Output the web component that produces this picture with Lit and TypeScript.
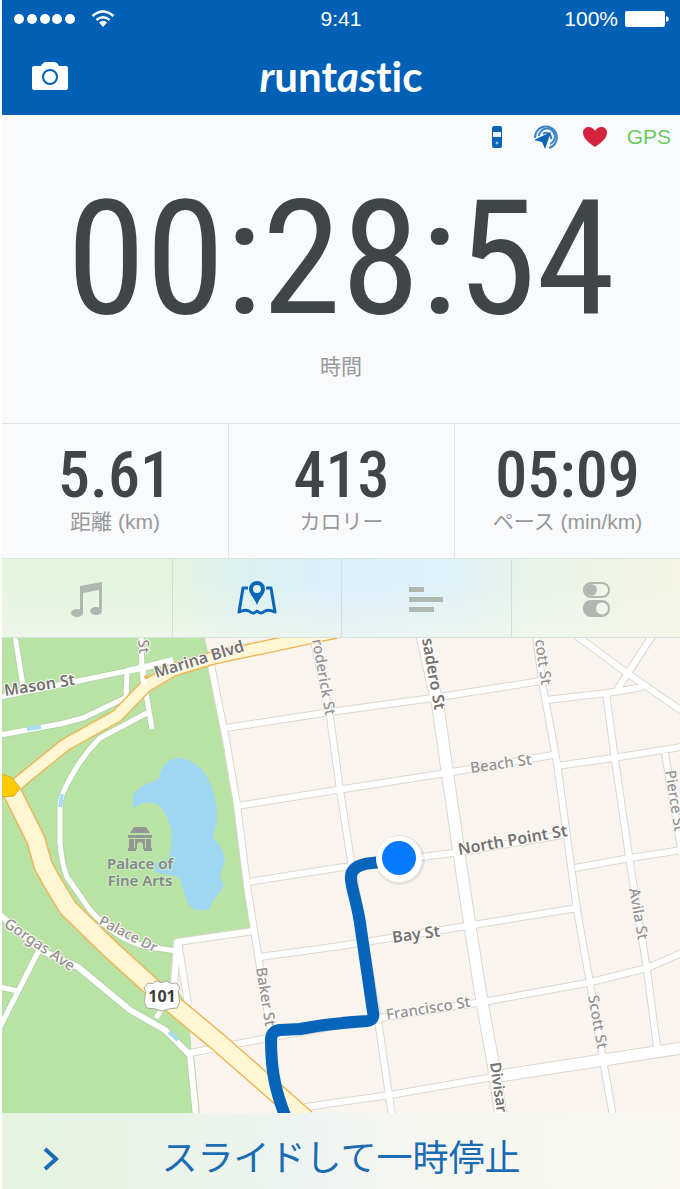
import { LitElement, html, css, svg } from "lit";
import { customElement, state } from "lit/decorators.js";

interface Label {
  text: string;
  x: number;
  y: number;
  angle: number;
  size: number;
  tone: "strong" | "soft" | "park";
}

const GREEN_ROADS = [
  "M0 697 L127 671 L173 660",
  "M15 636 L23 686",
  "M127 672 L126 697",
  "M0 735 L60 724 L83 718 L127 697",
  "M147 713 L100 738 Q85 753 75 770 Q60 795 60 805 L60 843 Q62 865 67 877 L90 910 Q115 938 143 946 L177 951",
  "M38 952 L0 1027",
  "M0 987 L18 991",
  "M156 1018 L164 1006",
];

const GORGAS = ["M0 915 L40 950 L78 967 L130 1010 L165 1030 L190 1055 L196 1116"];

const CITY_ROADS = [
  "M209 655 L226 740 L237 805 L247 885 L254 930 L262 980 L272 1037",
  "M177 951 L177 942 L254 931",
  "M177 942 L174 985 M178 942 L188 1004",
  "M313 636 L330 717 L340 790 L352 868 L378 1020 L392 1116",
  "M536 636 L543 687 L557 763 L577 910 L590 983 L603 1060 L613 1116",
  "M606 693 L615 760 L630 863 L647 970 L657 1047",
  "M665 753 L682 855",
  "M226 728 L337 711 L433 698 L541 681",
  "M546 700 L607 693 L643 687",
  "M237 806 L337 790 L440 774 L553 755",
  "M557 766 L613 758 L682 747",
  "M248 882 L337 868 L453 853 L568 834",
  "M575 868 L630 858 L682 850",
  "M260 957 L340 946 L473 925 L577 908",
  "M190 1053 L273 1037 L380 1018 L483 1002 L587 983 L647 968 L682 953",
  "M300 1108 L340 1102 L390 1095 L493 1077",
];

const WIDE_ROADS = [
  "M422 636 L438 707 L448 777 L463 880 L480 990 L493 1063 L501 1116",
  "M493 1077 L603 1060 L682 1048",
];

const DIAGONALS = ["M577 636 L627 673 L682 711", "M652 636 L617 690"];

const HIGHWAY = ["M8 784 L24 816 L36 840 L43 865 L51 880 L68 908 L108 947 L152 987 L218 1042 L306 1119"];
const MARINA = ["M10 790 L28 775 L65 745 L90 731 L117 716 L146 686 L173 670 L213 658 L270 646 L336 632"];

const LABELS: Label[] = [
  { text: "Mason St", x: 5, y: 696, angle: -9, size: 16, tone: "strong" },
  { text: "St", x: 138, y: 640, angle: 85, size: 15, tone: "soft" },
  { text: "Marina Blvd", x: 156, y: 678, angle: -17, size: 16, tone: "strong" },
  { text: "roderick St", x: 312, y: 640, angle: 80, size: 15, tone: "soft" },
  { text: "sadero St", x: 422, y: 639, angle: 80, size: 16, tone: "strong" },
  { text: "cott St", x: 535, y: 640, angle: 82, size: 15, tone: "soft" },
  { text: "Beach St", x: 471, y: 773, angle: -8, size: 15, tone: "soft" },
  { text: "North Point St", x: 459, y: 855, angle: -10, size: 16, tone: "strong" },
  { text: "Pierce St", x: 665, y: 771, angle: 81, size: 15, tone: "soft" },
  { text: "Bay St", x: 393, y: 943, angle: -8, size: 16, tone: "strong" },
  { text: "Avila St", x: 629, y: 889, angle: 80, size: 15, tone: "soft" },
  { text: "Francisco St", x: 387, y: 1020, angle: -9, size: 15, tone: "soft" },
  { text: "Scott St", x: 588, y: 996, angle: 80, size: 15, tone: "soft" },
  { text: "Divisar", x: 490, y: 1063, angle: 82, size: 15, tone: "strong" },
  { text: "Baker St", x: 256, y: 968, angle: 81, size: 15, tone: "soft" },
  { text: "Gorgas Ave", x: 3, y: 926, angle: 34, size: 15, tone: "soft" },
  { text: "Palace Dr", x: 98, y: 924, angle: 27, size: 14, tone: "soft" },
];

@customElement("run-map")
export class RunMap extends LitElement {
  static styles = css`
    :host {
      display: block;
      background: #f9f4ed;
      overflow: hidden;
    }
    svg {
      display: block;
      width: 100%;
      height: 100%;
    }
    text {
      font-family: "Noto Sans", "Open Sans", sans-serif;
      stroke-width: 2px;
      paint-order: stroke;
      stroke-linejoin: round;
    }
    .strong { fill: #737171; stroke: #fffdf9; font-weight: 600; }
    .soft { fill: #949191; stroke: #fdfaf6; font-weight: 500; }
    .park { fill: #85858c; stroke: #c9ebbd; font-weight: 600; text-anchor: middle; }
    .shield { fill: #3d3d3d; font-weight: 700; text-anchor: middle; stroke: none; }
    .line { fill: none; stroke-linejoin: round; }
    .edge { stroke: #dcd6cf; }
    .edge-park { stroke: #b5d3a8; }
    .road { stroke: #ffffff; }
    .amber { stroke: #edb75b; }
    .cream { stroke: #fff6d3; }
    .route { stroke: #0764bb; stroke-width: 12px; stroke-linecap: butt; }
  `;

  private lines(paths: string[], cls: string, width: number) {
    return paths.map((d) => svg`<path class="line ${cls}" d=${d} stroke-width=${width}></path>`);
  }

  render() {
    return html`
      <svg viewBox="2 638 678 475" preserveAspectRatio="xMidYMid slice" role="img" aria-label="Map">
        <path fill="#b9e3a5" d="M2 638 H205 L226 740 L254 931 L177 942 L174 985 L188 1005 L192 1055 L196 1113 H2 Z"></path>
        <path
          fill="#9fd7f3"
          d="M133 796 Q138 785 158 780 Q163 758 178 758 Q195 759 206 775 Q218 795 217 822 L213 837 Q225 850 225 861 L220 875 L224 886 L213 901 L209 910 L197 910 Q187 909 183 888 L179 877 L155 872 L154 863 L168 859 Q173 845 171 828 Q165 809 157 804 Q145 800 133 808 Z"
        ></path>

        ${this.lines(GREEN_ROADS, "edge-park", 7)}
        ${this.lines(["M141 636 L142 668 L152 729"], "edge-park", 7)}
        ${this.lines(GORGAS, "edge-park", 8)}
        ${this.lines(CITY_ROADS, "edge", 8)}
        ${this.lines(DIAGONALS, "edge", 8)}
        ${this.lines(WIDE_ROADS, "edge", 13)}
        ${this.lines(GREEN_ROADS, "road", 5)}
        ${this.lines(["M141 636 L142 668 L152 729"], "road", 5)}
        ${this.lines(GORGAS, "road", 6)}
        ${this.lines(CITY_ROADS, "road", 6)}
        ${this.lines(DIAGONALS, "road", 6)}
        ${this.lines(WIDE_ROADS, "road", 11)}

        ${this.lines(MARINA, "amber", 14)}
        ${this.lines(HIGHWAY, "amber", 20)}
        ${this.lines(MARINA, "cream", 11)}
        ${this.lines(HIGHWAY, "cream", 17)}
        ${this.lines(["M127 671 L146 667 L173 660"], "road", 6)}
        ${this.lines(["M142 664 L144 684"], "road", 6)}
        <circle cx="146" cy="677" r="2" fill="#edb75b"></circle>
        <path d="M0 773 L12 778 L20 788 L14 796 L0 797 Z" fill="#ffcb05" stroke="#d9a520" stroke-width="1"></path>
        <path class="line" stroke="#a8dcf5" stroke-width="4" d="M27 729 L41 727 M62 794 L60 807 M169 1032 L178 1040"></path>

        ${LABELS.map(
          (l) => svg`<text class=${l.tone} font-size=${l.size}
            transform="translate(${l.x} ${l.y}) rotate(${l.angle})">${l.text}</text>`
        )}
        <text class="park" font-size="15" x="140" y="869">Palace of</text>
        <text class="park" font-size="15" x="140" y="886">Fine Arts</text>
        <g fill="#929791">
          <path d="M134 827 H146 L150 833 H130 Z M128 835 H152 V838 H128 Z"></path>
          <path d="M129 839 H134 V849 H129 Z M146 839 H151 V849 H146 Z M128 848 H136 V851 H128 Z M144 848 H152 V851 H144 Z"></path>
          <path d="M135 839 H145 V849 H143 V844 Q140 840 137 844 V849 H135 Z"></path>
        </g>

        <path
          d="M148 983 Q153 985 156 981 Q162 984 167 981 Q171 985 176 983 L180 988 Q177 991 179 996 Q181 1003 177 1008 Q170 1008 162 1011 Q154 1008 147 1008 Q143 1003 145 996 Q147 991 144 988 Z"
          fill="#fff" stroke="#aaa69c" stroke-width="1"
        ></path>
        <text class="shield" font-size="16" x="162" y="1002">101</text>

        <path class="line route" d="M392 861 L372 863 Q349 865 351 880 C353 895 358 905 361 930 L373 1012 Q375 1020 367 1021 C335 1023 315 1026 300 1029 L280 1030 Q271 1031 271 1040 C271 1075 277 1095 286 1118"></path>
        <circle cx="400" cy="860" r="25" fill="#00000012"></circle>
        <circle cx="399" cy="859" r="23" fill="#fff"></circle>
        <circle cx="399" cy="858" r="17" fill="#067aff"></circle>
      </svg>
    `;
  }
}

const TABS = [
  {
    id: "music",
    label: "Music",
    icon: svg`<g fill="currentColor"><path d="M13 6 L35 2 V29 H32 V10 L16 13 V33 H13 Z"></path>
      <ellipse cx="10" cy="33" rx="6" ry="4"></ellipse><ellipse cx="29" cy="31" rx="6" ry="4"></ellipse></g>`,
  },
  {
    id: "map",
    label: "Map",
    icon: svg`<path d="M11 8 H6 L2 32 Q8 29 12 31 Q16 35 20 31 Q24 35 28 31 Q32 29 38 32 L34 8 H29" fill="none" stroke="currentColor" stroke-width="3" stroke-linejoin="round"></path>
      <path fill="currentColor" fill-rule="evenodd" d="M20 1 A8 8 0 0 1 28 9 C28 14 23 17 20 25 C17 17 12 14 12 9 A8 8 0 0 1 20 1 Z M20 5 A4 4 0 1 0 20 13 A4 4 0 1 0 20 5 Z"></path>`,
  },
  {
    id: "splits",
    label: "Splits",
    icon: svg`<path fill="currentColor" d="M3 7 H18 V12 H3 Z M3 17 H37 V22 H3 Z M3 27 H28 V32 H3 Z"></path>`,
  },
  {
    id: "settings",
    label: "Settings",
    icon: svg`<rect x="8" y="3" width="25" height="14" rx="7" fill="none" stroke="currentColor" stroke-width="2"></rect>
      <circle cx="15" cy="10" r="6" fill="currentColor"></circle>
      <rect x="7" y="20" width="27" height="17" rx="8" fill="currentColor"></rect>
      <circle cx="26" cy="28.500" r="6" fill="#eff5e8"></circle>`,
  },
];

const STATS = [
  { value: "5.61", label: "距離 (km)" },
  { value: "413", label: "カロリー" },
  { value: "05:09", label: "ペース (min/km)" },
];

@customElement("app-root")
export class AppRoot extends LitElement {
  @state() private active = "map";

  static styles = css`
    :host {
      display: flex;
      flex-direction: column;
      min-height: 100vh;
      box-sizing: border-box;
      padding-left: 2px;
      background: #fff;
      color: #404548;
      font-family: "Liberation Sans", "Noto Sans CJK JP", sans-serif;
    }
    * { box-sizing: border-box; }
    button {
      margin: 0;
      padding: 0;
      border: 0;
      background: none;
      color: inherit;
      font: inherit;
      cursor: pointer;
    }
    svg { display: block; }
    .top { background: #0060b6; color: #fff; height: 115px; }
    .status, .nav {
      display: grid;
      grid-template-columns: 1fr auto 1fr;
      align-items: center;
    }
    .status { height: 38px; padding: 0 11px; font-size: 21px; line-height: 24px; }
    .signal, .power { display: flex; align-items: center; }
    .signal { gap: 15px; }
    .power { justify-content: flex-end; gap: 7px; }
    .nav { height: 76px; padding: 0 30px; }
    .camera { justify-self: start; }
    .brand {
      margin: 0;
      font: 700 42px/48px "Lato", sans-serif;
      font-variant-ligatures: none;
    }
    .slant { font-style: italic; }
    .body { background: #f9fafc; }
    .sensors {
      display: flex;
      justify-content: flex-end;
      align-items: center;
      height: 44px;
      padding-right: 9px;
    }
    .sensor { display: flex; justify-content: center; width: 49px; }
    .gps { margin-left: 7px; color: #6ccb5f; font-size: 21px; line-height: 24px; }
    .clock {
      display: flex;
      flex-direction: column;
      align-items: center;
      height: 264px;
      padding-top: 6px;
    }
    .time, .value { font-family: "Roboto Condensed", "Roboto", sans-serif; white-space: nowrap; }
    .time { font-size: 160px; font-weight: 400; line-height: 188px; }
    .caption { color: #96989b; font-size: 21px; line-height: 28px; }
    .stats {
      display: grid;
      grid-template-columns: repeat(3, 1fr);
      height: 135px;
      border-top: 1px solid #e3e5e8;
    }
    .stat {
      display: flex;
      flex-direction: column;
      align-items: center;
      padding-top: 20px;
    }
    .stat + .stat { border-left: 1px solid #e3e5e8; }
    .value { font-size: 64px; font-weight: 500; line-height: 64px; }
    .tabs {
      display: grid;
      grid-template-columns: repeat(4, 1fr);
      height: 80px;
      border-top: 1px solid #dbe6df;
      border-bottom: 1px solid #d5e3dc;
      background:
        linear-gradient(to bottom, #f4f7ee00 30%, #f4f7eeaa),
        linear-gradient(to right, #e3f5dc 0%, #e3f5dc 24%, #dbf1ee 34%, #d9effb 50%, #ddf1f8 66%, #e9f4ea 78%, #f4f5e2 100%);
    }
    .tab {
      display: flex;
      align-items: center;
      justify-content: center;
      padding-top: 4px;
      color: #afb7b0;
    }
    .tab + .tab { border-left: 1px solid #cfe0dc; }
    .tab.on { color: #0a66b6; }
    run-map { flex: 1 1 475px; min-height: 0; height: 475px; }
    .slide {
      display: grid;
      grid-template-columns: 1fr auto 1fr;
      align-items: center;
      height: 76px;
      padding: 16px 38px 0;
      background: linear-gradient(to right, #e5f3df 0%, #e9f3e6 18%, #eef4f2 45%, #f6f6f1 62%, #f8f7f2 100%);
      color: #1b6cb2;
      font-size: 36px;
      line-height: 48px;
      text-align: left;
    }
  `;

  render() {
    return html`
      <header class="top">
        <div class="status">
          <div class="signal">
            <svg width="63" height="12" viewBox="0 0 63 12" fill="#fff" aria-hidden="true">
              ${[6, 19, 32, 44, 57].map((x) => svg`<circle cx=${x} cy="6" r="5"></circle>`)}
            </svg>
            <svg width="24" height="18" viewBox="0 0 24 18" fill="none" stroke="#fff" stroke-width="2.500" aria-hidden="true">
              <path d="M1.500 6 Q12 -3 22.500 6 M5.500 10 Q12 4.500 18.500 10"></path>
              <path d="M8 12.500 Q12 9 16 12.500 L12 17 Z" fill="#fff" stroke="none"></path>
            </svg>
          </div>
          <span>9:41</span>
          <div class="power">
            <span>100%</span>
            <svg width="44" height="16" viewBox="0 0 44 16" fill="#fff" aria-hidden="true">
              <rect width="40" height="16" rx="2"></rect>
              <path d="M41 5 Q44 6 44 8 Q44 10 41 11 Z"></path>
            </svg>
          </div>
        </div>
        <div class="nav">
          <button class="camera" aria-label="Camera">
            <svg width="36" height="28" viewBox="0 0 36 28" aria-hidden="true">
              <path fill="#fff" d="M2 4 H9 Q11 0 14 0 H22 Q25 0 27 4 H34 Q36 4 36 6 V26 Q36 28 34 28 H2 Q0 28 0 26 V6 Q0 4 2 4 Z"></path>
              <circle cx="18" cy="15" r="7" fill="none" stroke="#0060b6" stroke-width="2"></circle>
            </svg>
          </button>
          <h1 class="brand"><span class="slant">r</span>unt<span class="slant">as</span>tic</h1>
        </div>
      </header>

      <main class="body">
        <div class="sensors">
          <span class="sensor">
            <svg width="12" height="24" viewBox="0 0 12 24" aria-hidden="true">
              <rect x="1" y="1" width="10" height="22" rx="2" fill="#0a63b5"></rect>
              <rect x="2" y="7" width="8" height="5" fill="#e9f3fb"></rect>
              <circle cx="6" cy="18" r="1.500" fill="#8fbce2"></circle>
            </svg>
          </span>
          <span class="sensor">
            <svg width="26" height="26" viewBox="0 0 26 26" fill="none" stroke="#3f86c6" stroke-width="2" aria-hidden="true">
              <path d="M2 14 A11 11 0 1 1 16 24"></path>
              <path d="M6 12 A8 8 0 1 1 17 20"></path>
              <path d="M10 10 A5 5 0 0 1 18 15"></path>
              <path d="M18 8 L12 25 L9 18 L1 16 Z" fill="#0a63b5" stroke="none"></path>
            </svg>
          </span>
          <span class="sensor">
            <svg width="24" height="22" viewBox="0 0 24 22" aria-hidden="true">
              <path fill="#d5233f" d="M12 21 C5 16 0 12 0 6.500 C0 0 9 -1 12 5 C15 -1 24 0 24 6.500 C24 12 19 16 12 21 Z"></path>
            </svg>
          </span>
          <span class="gps">GPS</span>
        </div>

        <section class="clock">
          <div class="time">00:28:54</div>
          <div class="caption">時間</div>
        </section>

        <section class="stats">
          ${STATS.map(
            (s) => html`<div class="stat">
              <div class="value">${s.value}</div>
              <div class="caption">${s.label}</div>
            </div>`
          )}
        </section>
      </main>

      <nav class="tabs">
        ${TABS.map(
          (t) => html`<button
            class="tab ${t.id === this.active ? "on" : ""}"
            aria-label=${t.label}
            aria-pressed=${t.id === this.active}
            @click=${() => (this.active = t.id)}
          >
            <svg width="40" height="40" viewBox="0 0 40 40" aria-hidden="true">${t.icon}</svg>
          </button>`
        )}
      </nav>

      <run-map></run-map>

      <button class="slide">
        <svg width="20" height="26" viewBox="0 0 20 26" fill="none" stroke="#1b6cb2" stroke-width="4" aria-hidden="true">
          <path d="M5 3 L16 13 L5 23"></path>
        </svg>
        <span>スライドして一時停止</span>
      </button>
    `;
  }
}
